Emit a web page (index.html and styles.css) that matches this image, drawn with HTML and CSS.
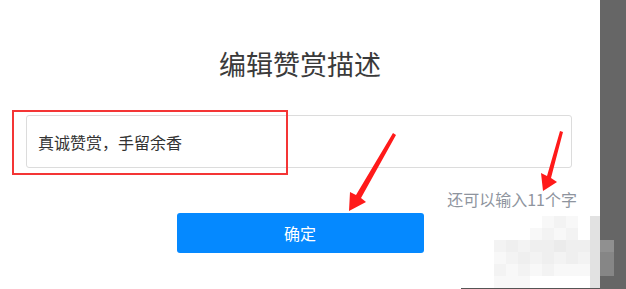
FILE: index.html
```html
<!DOCTYPE html>
<html lang="zh-CN">
<head>
<meta charset="utf-8">
<title>编辑赞赏描述</title>
<link rel="stylesheet" href="styles.css">
</head>
<body>
<div class="page">
  <main class="dialog">
    <h1 class="title">编辑赞赏描述</h1>
    <div class="field">
      <div class="input">真诚赞赏，手留余香</div>
      <div class="counter">还可以输入11个字</div>
    </div>
    <div class="actions">
      <button class="btn" type="button">确定</button>
    </div>
  </main>
  <aside class="side"></aside>

  <div class="highlight"></div>
  <svg class="arrows" width="626" height="289" viewBox="0 0 626 289" xmlns="http://www.w3.org/2000/svg">
    <path d="M393,133 L396,135 L361,198 L366,202 L349,211 L350,192 L356,195 Z" fill="#ff1a1a"/>
    <path d="M560,131 L563,132 L551,178 L557,182 L543,191 L541,173 L547,176 Z" fill="#ff1a1a"/>
  </svg>
  <div class="mosaic">
    <span class="w"></span><span class="w"></span><span class="w"></span><span class="w"></span><span class="a"></span><span class="b"></span><span class="a"></span><span class="w"></span><span class="e"></span><span class="n"></span>
    <span class="w"></span><span class="w"></span><span class="w"></span><span class="a"></span><span class="b"></span><span class="a"></span><span class="b"></span><span class="w"></span><span class="e"></span><span class="n"></span>
    <span class="b"></span><span class="c"></span><span class="b"></span><span class="c"></span><span class="c"></span><span class="d"></span><span class="c"></span><span class="c"></span><span class="e"></span><span class="g"></span>
    <span class="a"></span><span class="b"></span><span class="c"></span><span class="b"></span><span class="c"></span><span class="b"></span><span class="c"></span><span class="b"></span><span class="e"></span><span class="h"></span>
    <span class="b"></span><span class="a"></span><span class="b"></span><span class="a"></span><span class="b"></span><span class="a"></span><span class="a"></span><span class="a"></span><span class="e"></span><span class="h"></span>
    <span class="a"></span><span class="a"></span><span class="a"></span><span class="w"></span><span class="w"></span><span class="w"></span><span class="w"></span><span class="w"></span><span class="e"></span><span class="n"></span>
  </div>
  <div class="bottom-line"></div>
</div>
</body>
</html>
```

FILE: styles.css
```css
html, body {
  margin: 0;
  padding: 0;
  background: #fff;
}

body {
  font-family: "Noto Sans CJK SC", "Noto Sans", sans-serif;
}

.page {
  position: relative;
  display: flex;
  width: 626px;
  height: 289px;
  overflow: hidden;
}

.dialog {
  width: 600px;
  flex: none;
  display: flex;
  flex-direction: column;
}

.side {
  flex: 1;
  background: #666;
}

.title {
  margin: 50px 0 0;
  font-size: 27px;
  line-height: 27px;
  font-weight: 400;
  color: #3a3a3a;
  text-align: center;
}

.field {
  margin-top: 38px;
  padding: 0 28px 0 26px;
  display: flex;
  flex-direction: column;
}

.input {
  height: 51px;
  border: 1px solid #dcdcdc;
  border-radius: 3px;
  padding-left: 11px;
  display: flex;
  align-items: center;
  font-size: 16px;
  color: #333;
}

.counter {
  margin-top: 21px;
  margin-right: -5px;
  align-self: flex-end;
  font-size: 16px;
  line-height: 20px;
  color: #8e949e;
}

.actions {
  margin-top: 4px;
  display: flex;
  justify-content: center;
}

.btn {
  width: 247px;
  height: 40px;
  border: none;
  border-radius: 3px;
  background: #0589ff;
  color: #fff;
  font-family: inherit;
  font-size: 16px;
  padding: 0;
}

/* annotation overlays */
.highlight {
  position: absolute;
  left: 12px;
  top: 110px;
  width: 272px;
  height: 61px;
  border: 2px solid #f43535;
}

.arrows {
  position: absolute;
  left: 0;
  top: 0;
}

.mosaic {
  position: absolute;
  left: 494px;
  top: 216px;
  display: grid;
  grid-template-columns: repeat(8, 12px) 10px 14px;
  grid-template-rows: repeat(6, 12px);
}

.mosaic .w { background: #fff; }
.mosaic .a { background: #f8f8f8; }
.mosaic .b { background: #f3f3f3; }
.mosaic .c { background: #efefef; }
.mosaic .d { background: #ebebeb; }
.mosaic .e { background: #e2e2e2; }
.mosaic .n { background: #666; }
.mosaic .g { background: #909090; }
.mosaic .h { background: #868686; }

.bottom-line {
  position: absolute;
  left: 461px;
  top: 288px;
  width: 139px;
  height: 1px;
  background: #555;
}
```
